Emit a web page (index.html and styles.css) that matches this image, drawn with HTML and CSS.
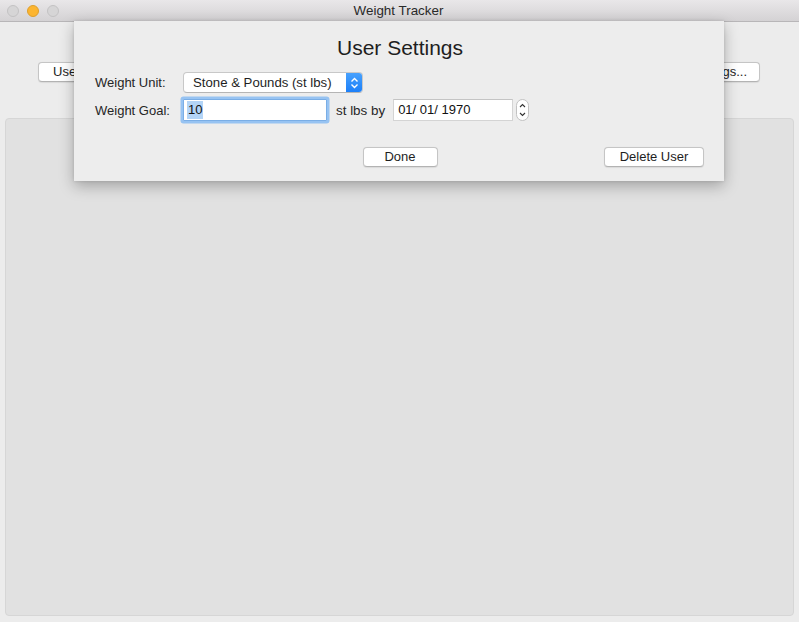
FILE: index.html
```html
<!DOCTYPE html>
<html>
<head>
<meta charset="utf-8">
<link rel="stylesheet" href="styles.css">
</head>
<body>
<div class="window">
  <div class="titlebar">
    <div class="lights">
      <span class="light light-grey"></span>
      <span class="light light-orange"></span>
      <span class="light light-grey"></span>
    </div>
    <div class="title">Weight Tracker</div>
  </div>
  <div class="content">
    <div class="toolbar">
      <button class="btn btn-left">User...</button>
      <button class="btn btn-right">User Settings...</button>
    </div>
    <div class="panel"></div>
  </div>

  <div class="sheet">
    <h1 class="sheet-title">User Settings</h1>
    <div class="form">
      <div class="row row-unit">
        <span class="label">Weight Unit:</span>
        <div class="popup">
          <span class="popup-text">Stone &amp; Pounds (st lbs)</span>
          <span class="popup-arrows">
            <svg width="9" height="12" viewBox="0 0 9 12"><path d="M1.5 4.5 L4.5 1.5 L7.5 4.5 M1.5 7.5 L4.5 10.5 L7.5 7.5" fill="none" stroke="#fff" stroke-width="1.4"/></svg>
          </span>
        </div>
      </div>
      <div class="row row-goal">
        <span class="label">Weight Goal:</span>
        <div class="field focus"><span class="sel">10</span></div>
        <span class="unit">st lbs by</span>
        <div class="date">01/ 01/ 1970</div>
        <div class="stepper">
          <svg width="13" height="22" viewBox="0 0 13 22"><path d="M4 8 L6.5 5.5 L9 8 M4 14 L6.5 16.5 L9 14" fill="none" stroke="#333" stroke-width="1.1"/></svg>
        </div>
      </div>
    </div>
    <div class="actions">
      <span></span>
      <button class="btn btn-done">Done</button>
      <button class="btn btn-delete">Delete User</button>
    </div>
  </div>
</div>
</body>
</html>
```

FILE: styles.css
```css
* { box-sizing: border-box; }
html, body { margin: 0; padding: 0; }
body {
  width: 799px;
  height: 622px;
  overflow: hidden;
  font-family: "Liberation Sans", Arial, sans-serif;
  font-size: 13px;
  color: #222;
  background: #ececec;
}
.window {
  position: relative;
  width: 799px;
  height: 622px;
  display: flex;
  flex-direction: column;
  background: #ececec;
}
.titlebar {
  position: relative;
  height: 22px;
  flex: none;
  background: linear-gradient(#e9e7e9, #d4d2d4);
  border-bottom: 1px solid #b8b6b8;
  display: flex;
  align-items: center;
  justify-content: center;
}
.lights {
  position: absolute;
  left: 7px;
  top: 5px;
  display: flex;
  gap: 8px;
}
.light {
  width: 12px;
  height: 12px;
  border-radius: 50%;
  display: block;
}
.light-grey { background: #d6d5d6; border: 1px solid #c3c2c3; }
.light-orange { background: #fcb530; border: 1px solid #de9f2c; }
.title {
  font-size: 13.4px;
  color: #2a2a2a;
  line-height: 22px;
  padding-right: 2px;
}
.content {
  flex: 1;
  display: flex;
  flex-direction: column;
  padding: 40px 5px 6px 5px;
}
.toolbar {
  display: flex;
  justify-content: space-between;
  padding: 0 34px 0 33px;
  height: 20px;
}
.btn {
  font-family: inherit;
  font-size: 13px;
  color: #1e1e1e;
  height: 20px;
  line-height: 18px;
  padding: 0 14px;
  background: #fff;
  border: 1px solid #c5c5c5;
  border-bottom-color: #b3b3b3;
  border-radius: 4px;
  box-shadow: 0 0.5px 1px rgba(0,0,0,0.08);
}
.btn-right { padding: 0 12px 0 30px; }
.panel {
  flex: 1;
  margin-top: 36px;
  background: #e1e1e1;
  border: 1px solid #d6d6d6;
  border-radius: 4px;
}
.sheet {
  position: absolute;
  left: 74px;
  top: 21px;
  width: 650px;
  height: 160px;
  background: #ededed;
  box-shadow: 0 5px 14px rgba(0,0,0,0.28), 0 0 3px rgba(0,0,0,0.12);
  padding: 14px 20px 0 21px;
  display: flex;
  flex-direction: column;
}
.sheet-title {
  margin: 0;
  font-weight: normal;
  font-size: 21px;
  line-height: 26px;
  text-align: center;
  color: #1e1e1e;
  padding-left: 1px;
}
.form {
  margin-top: 11px;
  display: flex;
  flex-direction: column;
  gap: 5px;
}
.row {
  display: flex;
  align-items: center;
}
.label {
  width: 88px;
  flex: none;
  color: #262626;
}
.row-unit { height: 21px; }
.popup {
  width: 180px;
  height: 21px;
  display: flex;
  background: #fff;
  border: 1px solid #c8c8c8;
  border-bottom-color: #b5b5b5;
  border-radius: 4px;
  overflow: hidden;
}
.popup-text {
  flex: 1;
  padding-left: 9px;
  line-height: 19px;
  color: #1e1e1e;
  font-size: 13.2px;
}
.popup-arrows {
  width: 17px;
  margin: -1px -1px -1px 0;
  background: linear-gradient(#4aa3fd, #1a7ef9);
  border-radius: 0 4px 4px 0;
  display: flex;
  align-items: center;
  justify-content: center;
}
.row-goal { height: 24px; }
.field {
  width: 144px;
  height: 22px;
  margin-left: 0;
  background: #fff;
  border: 1px solid #7aaee6;
  box-shadow: 0 0 0 2.5px #97c3f2;
  border-radius: 1px;
  padding-left: 3px;
  line-height: 20px;
  color: #111;
}
.sel {
  background: #b3d4f6;
  display: inline-block;
  line-height: 18px;
  padding: 0 1px;
  margin-top: 1px;
}
.unit {
  margin-left: 9px;
  color: #262626;
  font-size: 13.4px;
}
.date {
  margin-left: 8px;
  width: 120px;
  height: 22px;
  background: #fff;
  border: 1px solid #d4d4d4;
  border-top-color: #c4c4c4;
  padding-left: 4px;
  line-height: 20px;
  color: #111;
}
.stepper {
  margin-left: 3px;
  width: 13px;
  height: 22px;
  background: #fff;
  border: 1px solid #c2c2c2;
  border-radius: 7px;
  display: flex;
  align-items: center;
  justify-content: center;
  overflow: hidden;
}
.stepper svg { flex: none; }
.actions {
  margin-top: 25px;
  display: grid;
  grid-template-columns: 1fr auto 1fr;
  align-items: center;
}
.btn-done {
  width: 75px;
  padding: 0;
  margin-left: 1px;
}
.btn-delete {
  justify-self: end;
  width: 100px;
  padding: 0;
}
```
